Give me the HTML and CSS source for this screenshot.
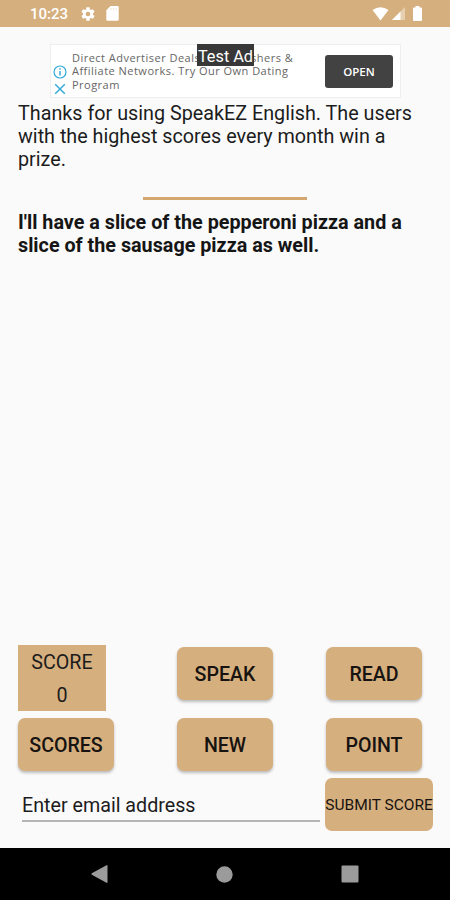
FILE: index.html
```
<!DOCTYPE html>
<html lang="en">
  <head>
    <meta charset="UTF-8" />
    <meta name="viewport" content="width=device-width, initial-scale=1.0" />
    <title>SpeakEZ English</title>
    <link rel="stylesheet" href="styles.css">
  </head>
  <body>
    <div class="status-bar">
      <span class="clock">10:23</span>
      <svg class="gear" width="16" height="16" viewBox="0 0 24 24">
        <path fill="#fff" d="M19.43 12.98c.04-.32.07-.64.07-.98s-.03-.66-.07-.98l2.11-1.65c.19-.15.24-.42.12-.64l-2-3.46c-.12-.22-.39-.3-.61-.22l-2.49 1c-.52-.4-1.08-.73-1.69-.98l-.38-2.65C14.46 2.18 14.25 2 14 2h-4c-.25 0-.46.18-.49.42l-.38 2.65c-.61.25-1.17.59-1.69.98l-2.49-1c-.23-.09-.49 0-.61.22l-2 3.46c-.13.22-.07.49.12.64l2.11 1.65c-.04.32-.07.65-.07.98s.03.66.07.98l-2.11 1.65c-.19.15-.24.42-.12.64l2 3.46c.12.22.39.3.61.22l2.49-1c.52.4 1.08.73 1.69.98l.38 2.65c.03.24.24.42.49.42h4c.25 0 .46-.18.49-.42l.38-2.65c.61-.25 1.17-.59 1.69-.98l2.49 1c.23.09.49 0 .61-.22l2-3.46c.12-.22.07-.49-.12-.64l-2.11-1.65zM12 15.5a3.5 3.5 0 1 1 0-7 3.5 3.5 0 0 1 0 7z" />
      </svg>
      <svg class="card" width="13" height="15" viewBox="0 0 13 15">
        <path fill="#fff" d="M4.5 0h7a1.2 1.2 0 0 1 1.2 1.2v12.3a1.2 1.2 0 0 1-1.2 1.2h-10a1.2 1.2 0 0 1-1.2-1.2V4.3z" />
        <path stroke="#d6af7e" stroke-opacity=".35" d="M5 2v2M7.5 2v2M10 2v2" />
      </svg>
      <div class="signals">
        <svg width="17" height="14" viewBox="0 0 17 14">
          <path fill="#fff" d="M.5 3Q8.5-2.5 16.5 3l-8 10.500z" />
        </svg>
        <svg width="13" height="13" viewBox="0 0 13 13">
          <path fill="#fff" fill-opacity=".4" d="M13 0v13H0z" />
          <path fill="#fff" d="M8.5 4.5V13H0z" />
        </svg>
        <svg class="battery" width="9" height="15" viewBox="0 0 9 15">
          <path fill="#fff" d="M2.5 0h4v1.5H8a1 1 0 0 1 1 1V14a1 1 0 0 1-1 1H1a1 1 0 0 1-1-1V2.5a1 1 0 0 1 1-1h1.500z" />
        </svg>
      </div>
    </div>

    <div class="ad">
      <div class="ad-icons">
        <svg width="14" height="14" viewBox="0 0 14 14" fill="none" stroke="#35abd8">
          <circle cx="7" cy="7" r="6" stroke-width="1.2" />
          <path stroke-width="1.5" d="M7 6v4.5M7 3.3v1.5" />
        </svg>
        <svg width="14" height="14" viewBox="0 0 14 14" stroke="#35abd8" stroke-width="1.5">
          <path d="M2.2 2.2l9.6 9.6M11.8 2.2l-9.6 9.6" />
        </svg>
      </div>
      <div class="ad-text">
        Direct Advertiser Deals for Publishers &amp;<br>
        Affiliate Networks. Try Our Own Dating<br>
        Program
      </div>
      <div class="ad-open">OPEN</div>
      <div class="test-label">Test Ad</div>
    </div>

    <div class="content">
      <p class="intro">
        Thanks for using SpeakEZ English. The users<br>
        with the highest scores every month win a<br>
        prize.
      </p>
      <div class="divider"></div>
      <p class="sentence">
        I'll have a slice of the pepperoni pizza and a<br>
        slice of the sausage pizza as well.
      </p>
    </div>

    <div class="controls">
      <div class="row score-row">
        <div class="col"><div class="score"><span>SCORE</span><span>0</span></div></div>
        <div class="col"><button>SPEAK</button></div>
        <button>READ</button>
      </div>
      <div class="row">
        <div class="col"><button>SCORES</button></div>
        <div class="col"><button>NEW</button></div>
        <button>POINT</button>
      </div>
      <div class="submit-row">
        <div class="email">Enter email address</div>
        <button class="submit">SUBMIT SCORE</button>
      </div>
    </div>

    <div class="nav-bar">
      <svg width="17" height="20" viewBox="0 0 17 20">
        <path fill="#9b9b9b" d="M15.5 1.2Q16.5.8 16.5 2v16q0 1.2-1 .8L.8 10.700Q0 10 .8 9.300z" />
      </svg>
      <svg width="17" height="17" viewBox="0 0 17 17">
        <circle fill="#9b9b9b" cx="8.5" cy="8.5" r="8.2" />
      </svg>
      <svg width="18" height="18" viewBox="0 0 18 18">
        <rect fill="#9b9b9b" x=".5" y=".5" width="17" height="17" rx="1" />
      </svg>
    </div>
  </body>
</html>
```
FILE: styles.css
```
* {
  box-sizing: border-box;
}

body {
  margin: 0;
  height: 900px;
  display: flex;
  flex-direction: column;
  font-family: Roboto, "Liberation Sans", sans-serif;
  color: #1c1c1c;
  background-color: #fafafa;
}

.status-bar {
  height: 27px;
  padding: 0 28px 0 30px;
  display: flex;
  align-items: center;
  color: #fff;
  background-color: #d6af7e;
}

.clock {
  width: 50px;
  font-size: 15px;
  font-weight: 500;
  padding-top: 1px;
}

.card {
  margin-left: 10px;
}

.signals {
  margin-left: auto;
  display: flex;
  align-items: center;
  gap: 3px;
}

.signals .battery {
  margin-left: 5px;
}

.ad {
  position: relative;
  width: 351px;
  height: 54px;
  margin: 17px 0 0 50px;
  padding: 0 7px 0 2px;
  display: flex;
  align-items: center;
  background-color: #fff;
  border: 1px solid #eee;
}

.ad-icons {
  display: flex;
  flex-direction: column;
  gap: 3px;
  padding-top: 18px;
  margin-right: 5px;
}

.ad-text {
  flex: 1;
  font-family: "Open Sans", sans-serif;
  font-size: 11px;
  line-height: 13.3px;
  letter-spacing: 0.48px;
  color: #666;
  white-space: nowrap;
}

.ad-open {
  width: 68px;
  height: 33px;
  line-height: 33px;
  text-align: center;
  font-family: "Open Sans", sans-serif;
  font-size: 11.5px;
  font-weight: 600;
  color: #fff;
  background-color: #424242;
  border-radius: 3px;
}

.test-label {
  position: absolute;
  left: 146px;
  top: -1px;
  width: 57px;
  height: 22px;
  line-height: 25px;
  text-align: center;
  font-size: 16.3px;
  color: #fff;
  background-color: #383838;
}

.content {
  padding: 4px 18px 0;
  font-size: 19.75px;
  line-height: 23px;
  white-space: nowrap;
}

.intro,
.sentence {
  margin: 0;
}

.divider {
  width: 164px;
  height: 3px;
  margin: 26px 0 11px 125px;
  background-color: #d3a76f;
}

.sentence {
  font-weight: 700;
  color: #151515;
}

.controls {
  margin-top: auto;
  padding: 0 17px 17px 18px;
}

.row {
  display: flex;
}

.row + .row {
  margin-top: 7px;
}

.col {
  width: 159px;
}

.col + .col {
  width: 149px;
}

.score {
  width: 88px;
  height: 66px;
  padding-top: 1px;
  display: flex;
  flex-direction: column;
  align-items: center;
  font-size: 19.7px;
  line-height: 33px;
  background-color: #d6af7e;
}

button {
  display: block;
  width: 96px;
  height: 53px;
  padding: 2px 0 0;
  border: none;
  border-radius: 7px;
  font-family: inherit;
  font-size: 19.6px;
  font-weight: 500;
  color: #161310;
  background-color: #d6af7e;
  box-shadow: 0 2px 3px rgba(0, 0, 0, 0.25);
  white-space: nowrap;
}

.score-row button {
  margin-top: 2px;
}

.submit-row {
  display: flex;
  justify-content: space-between;
  margin-top: 7px;
}

.email {
  width: 298px;
  height: 44px;
  margin-left: 4px;
  line-height: 56px;
  font-size: 19.7px;
  border-bottom: 2px solid #b5b5b5;
}

.submit {
  width: 108px;
  padding: 0;
  font-size: 15.5px;
  font-weight: 400;
  box-shadow: none;
}

.nav-bar {
  height: 52px;
  padding: 0 91px;
  display: flex;
  align-items: center;
  justify-content: space-between;
  background-color: #000;
}
```
